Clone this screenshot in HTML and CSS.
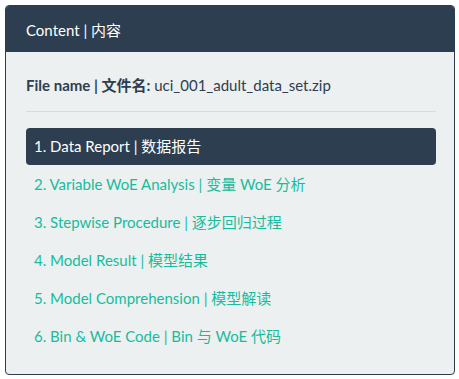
FILE: index.html
```html
<html lang="en">
<head>
<meta charset="UTF-8" />
<meta name="viewport" content="width=device-width, initial-scale=1.0" />
<title>Content</title>
<link rel="stylesheet" href="styles.css">
</head>
<body>

<div class="panel">
  <div class="panel-heading">Content | 内容</div>
  <div class="panel-body">
    <p class="file-name"><b>File name | 文件名:</b> uci_001_adult_data_set.zip</p>
    <hr />
    <!-- Навигация по разделам -->
    <ul class="nav-pills">
      <li class="active"><a href="#">1. Data Report | 数据报告</a></li>
      <li><a href="#">2. Variable WoE Analysis | 变量 WoE 分析</a></li>
      <li><a href="#">3. Stepwise Procedure | 逐步回归过程</a></li>
      <li><a href="#">4. Model Result | 模型结果</a></li>
      <li><a href="#">5. Model Comprehension | 模型解读</a></li>
      <li><a href="#">6. Bin &amp; WoE Code | Bin 与 WoE 代码</a></li>
    </ul>
  </div>
</div>

</body>
</html>
```

FILE: styles.css
```css
body {
  font-family: Lato, "Noto Sans CJK SC", sans-serif;
  font-size: 15px;
  color: #2c3e50;
  background-color: #fff;
  margin: 0;
  padding: 5px;
}
.panel {
  width: 450px;
  height: 370px;
  box-sizing: border-box;
  border: 1px solid #2c3e50;
  border-radius: 4px;
  background-color: #ecf0f1;
  overflow: hidden;
}
.panel-heading {
  background-color: #2c3e50;
  color: #fff;
  height: 46px;
  line-height: 48px;
  padding: 0 20px;
}
.panel-body {
  padding: 23px 18px 20px 20px;
}
.file-name {
  margin: 0;
  line-height: 21px;
}
hr {
  border: none;
  border-top: 1px solid #d6dbdc;
  margin: 15px 0 16px;
}
.nav-pills {
  list-style: none;
  margin: 0;
  padding: 0;
}
.nav-pills li a {
  display: block;
  padding: 0 8px;
  height: 38px;
  line-height: 37px;
  border-radius: 4px;
  color: #18bc9c;
  text-decoration: none;
}
.nav-pills li.active a {
  height: 37px;
  margin-bottom: 1px;
  background-color: #2c3e50;
  color: #fff;
}
```
